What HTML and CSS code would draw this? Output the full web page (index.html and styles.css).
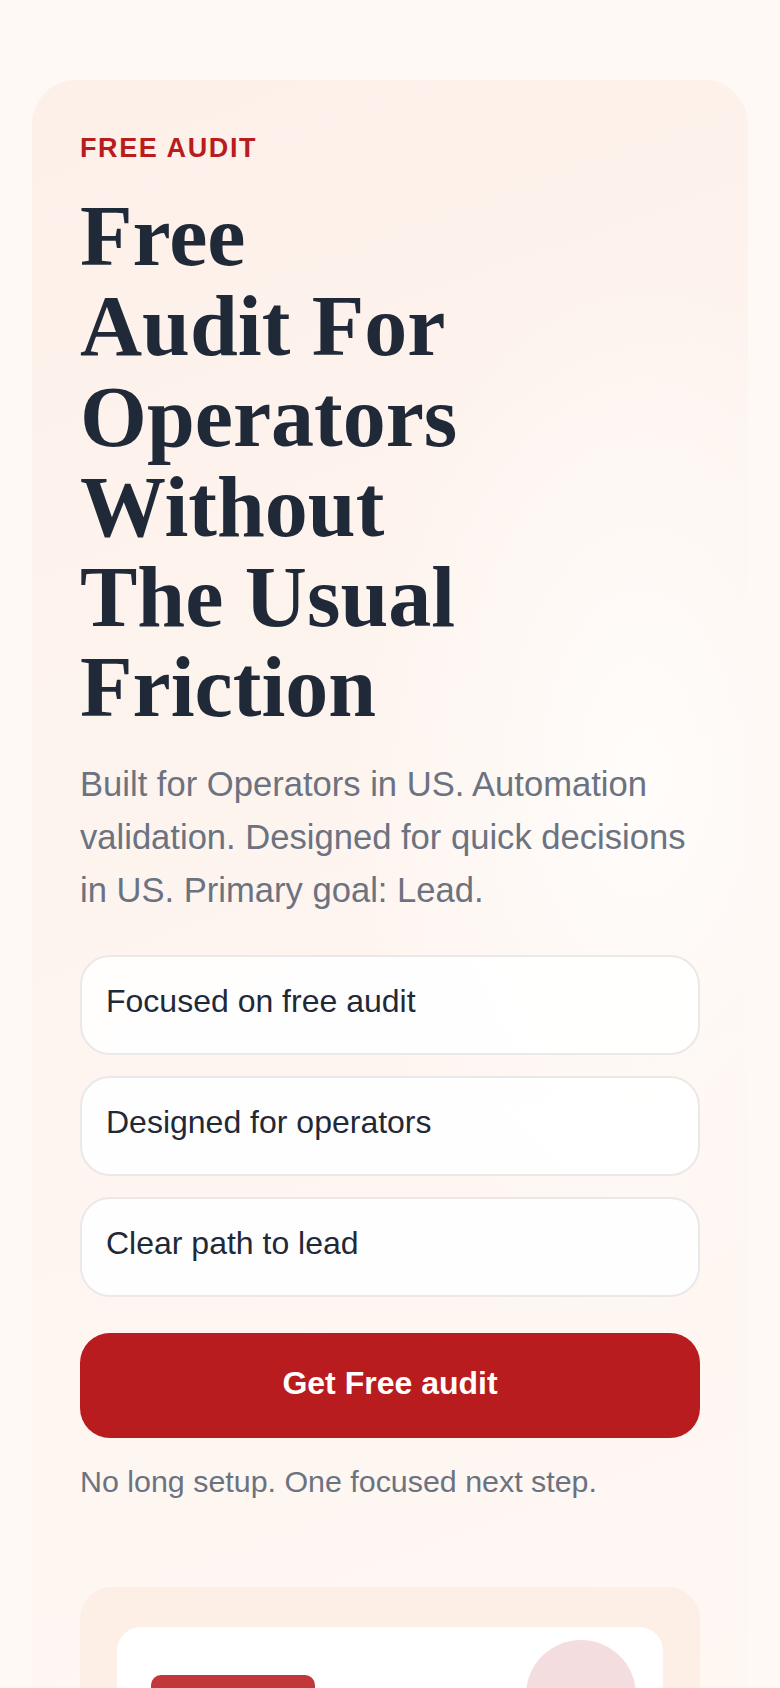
FILE: index.html
```html
<!DOCTYPE html>
<html lang="en">
<head>
<meta charset="utf-8">
<title>Free Audit</title>
<link rel="stylesheet" href="styles.css">
</head>
<body>
<main class="page">
  <section class="hero-card">
    <p class="eyebrow">FREE AUDIT</p>
    <h1 class="title">Free Audit For Operators Without The Usual Friction</h1>
    <p class="lead">Built for Operators in US. Automation validation. Designed for quick decisions in US. Primary goal: Lead.</p>
    <ul class="points">
      <li class="point">Focused on free audit</li>
      <li class="point">Designed for operators</li>
      <li class="point">Clear path to lead</li>
    </ul>
    <a class="cta" href="#">Get Free audit</a>
    <p class="note">No long setup. One focused next step.</p>
    <div class="visual">
      <div class="visual-card">
        <span class="visual-circle"></span>
        <div class="visual-bar"></div>
        <div class="visual-line"></div>
        <div class="visual-line short"></div>
        <div class="visual-line"></div>
      </div>
    </div>
  </section>
</main>
</body>
</html>
```
FILE: styles.css
```css
* { box-sizing: border-box; }

html, body {
  margin: 0;
  padding: 0;
}

body {
  background: #fef9f5;
  font-family: "Liberation Sans", Arial, sans-serif;
  color: #1f2937;
}

.page {
  padding: 80px 32px 40px;
}

.hero-card {
  border-radius: 44px;
  padding: 52px 48px 60px;
  background:
    radial-gradient(ellipse 60% 40% at 85% 35%, rgba(255, 253, 251, 0.9), rgba(255, 253, 251, 0) 70%),
    linear-gradient(160deg, #fdf0e9 0%, #fef5f0 45%, #fef8f4 100%);
}

.eyebrow {
  margin: 0;
  font-size: 27px;
  line-height: 32px;
  font-weight: 700;
  letter-spacing: 0.06em;
  color: #b91c1c;
}

.title {
  margin: 27px 0 0;
  max-width: 9ch;
  font-family: "Liberation Serif", "Times New Roman", serif;
  font-size: 86px;
  line-height: 1.05;
  font-weight: 700;
  color: #1f2937;
}

.lead {
  margin: 25px 0 0;
  font-size: 34.6px;
  line-height: 1.54;
  color: #6b7280;
}

.points {
  list-style: none;
  margin: 37px 0 0;
  padding: 0;
  display: flex;
  flex-direction: column;
  gap: 21px;
}

.point {
  background: rgba(255, 255, 255, 0.88);
  border: 2px solid #ebe8e7;
  border-radius: 30px;
  padding: 22px 24px 29px;
  font-size: 32px;
  line-height: 45px;
  color: #1f2937;
}

.cta {
  display: block;
  margin-top: 36px;
  padding: 28px 24px 32px;
  border-radius: 30px;
  background: #b91c1e;
  color: #ffffff;
  text-align: center;
  text-decoration: none;
  font-size: 32px;
  line-height: 45px;
  font-weight: 700;
}

.note {
  margin: 21px 0 0;
  font-size: 30.4px;
  line-height: 45px;
  color: #6b7280;
}

.visual {
  margin-top: 83px;
  background: #fdeee6;
  border-radius: 32px;
  padding: 40px 37px;
}

.visual-card {
  position: relative;
  background: #ffffff;
  border-radius: 24px;
  padding: 48px 34px 40px;
  min-height: 320px;
}

.visual-circle {
  position: absolute;
  top: 13px;
  right: 27px;
  width: 110px;
  height: 110px;
  border-radius: 50%;
  background: #f4dddf;
}

.visual-bar {
  width: 164px;
  height: 44px;
  border-radius: 10px;
  background: #c2373a;
}

.visual-line {
  margin-top: 28px;
  height: 18px;
  width: 80%;
  border-radius: 9px;
  background: #f3ece9;
}

.visual-line.short {
  width: 55%;
}
```
